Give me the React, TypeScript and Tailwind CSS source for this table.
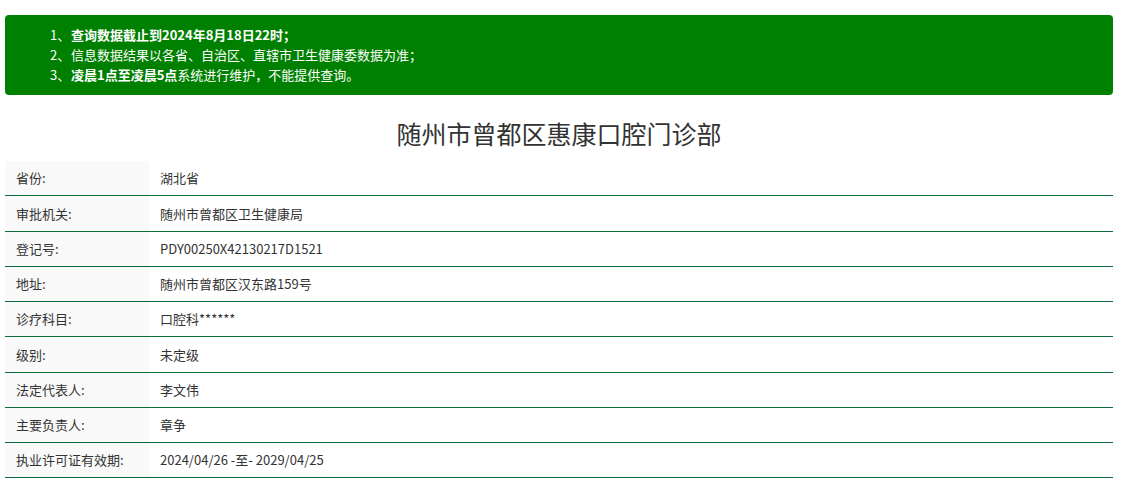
const NOTES = [
  { bold: "查询数据截止到2024年8月18日22时；", rest: "" },
  { bold: "", rest: "信息数据结果以各省、自治区、直辖市卫生健康委数据为准；" },
  { bold: "凌晨1点至凌晨5点", rest: "系统进行维护，不能提供查询。" },
];

const ROWS: ReadonlyArray<[string, string]> = [
  ["省份:", "湖北省"],
  ["审批机关:", "随州市曾都区卫生健康局"],
  ["登记号:", "PDY00250X42130217D1521"],
  ["地址:", "随州市曾都区汉东路159号"],
  ["诊疗科目:", "口腔科******"],
  ["级别:", "未定级"],
  ["法定代表人:", "李文伟"],
  ["主要负责人:", "章争"],
  ["执业许可证有效期:", "2024/04/26 -至- 2029/04/25"],
];

export default function App() {
  return (
    <div
      className="min-h-[484px] bg-white px-[5px] pt-[15px] text-[#333]"
      style={{ fontFamily: "'Noto Sans CJK SC', sans-serif" }}
    >
      <div className="w-[1108px] rounded-[4px] bg-[#008000] py-[10px] pl-[45px] text-[13px] leading-[20px] text-white">
        {NOTES.map((note, i) => (
          <div key={i} className="flex">
            <span className="w-[21px] shrink-0">{i + 1}、</span>
            <span>
              {note.bold && <b className="font-bold">{note.bold}</b>}
              {note.rest}
            </span>
          </div>
        ))}
      </div>

      <h1 className="w-[1108px] pt-[21px] pb-[10px] text-center text-[25px] leading-[35px] text-[#333]">
        随州市曾都区惠康口腔门诊部
      </h1>

      <div className="w-[1108px] text-[13px]">
        {ROWS.map(([label, value]) => (
          <div key={label} className="flex h-[35.25px] border-b border-[#0d6b3a]">
            <div className="flex w-[144px] shrink-0 items-center bg-[#f9f9f9] pl-[11px]">{label}</div>
            <div className="flex items-center pl-[11px]">{value}</div>
          </div>
        ))}
      </div>
    </div>
  );
}
